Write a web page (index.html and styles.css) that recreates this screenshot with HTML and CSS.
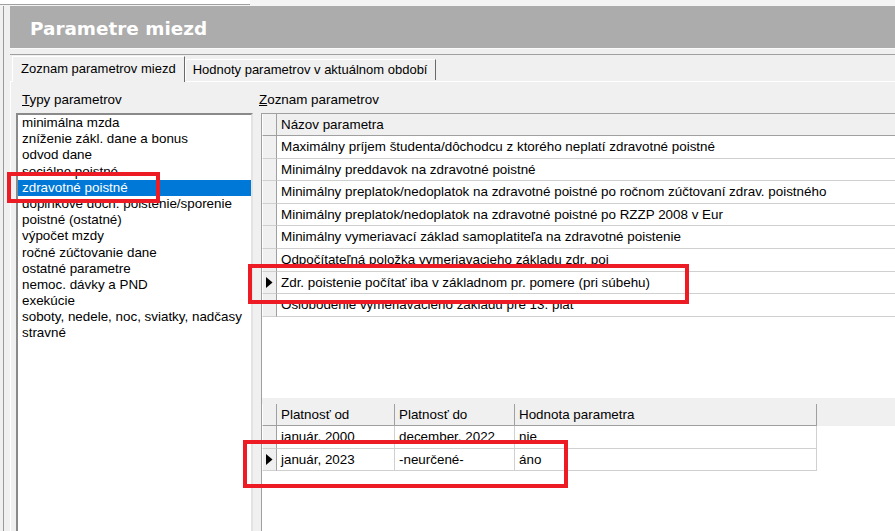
FILE: index.html
```html
<!DOCTYPE html>
<html lang="sk">
<head>
  <meta charset="UTF-8" />
  <title>Parametre miezd</title>
  <link rel="stylesheet" href="styles.css">
</head>
<body>
  <div class="topbar"><div class="topbar-left"></div></div>
  <div class="window">
    <div class="gutter"></div>
    <div class="main">
      <div class="title">Parametre miezd</div>
      <div class="tabstrip">
        <div class="tab active">Zoznam parametrov miezd</div>
        <div class="tab">Hodnoty parametrov v aktuálnom období</div>
      </div>
      <div class="page">
        <div class="types">
          <div class="caption"><u>T</u>ypy parametrov</div>
          <ul class="listbox">
            <li>minimálna mzda</li>
            <li>zníženie zákl. dane a bonus</li>
            <li>odvod dane</li>
            <li>sociálne poistné</li>
            <li class="selected">zdravotné poistné</li>
            <li>doplnkové dôch. poistenie/sporenie</li>
            <li>poistné (ostatné)</li>
            <li>výpočet mzdy</li>
            <li>ročné zúčtovanie dane</li>
            <li>ostatné parametre</li>
            <li>nemoc. dávky a PND</li>
            <li>exekúcie</li>
            <li>soboty, nedele, noc, sviatky, nadčasy</li>
            <li>stravné</li>
          </ul>
        </div>
        <div class="params">
          <div class="caption caption-params"><u>Z</u>oznam parametrov</div>
          <div class="grid grid-top">
            <div class="row head"><div class="ind"></div><div class="cell">Názov parametra</div></div>
            <div class="row"><div class="ind"></div><div class="cell">Maximálny príjem študenta/dôchodcu z ktorého neplatí zdravotné poistné</div></div>
            <div class="row"><div class="ind"></div><div class="cell">Minimálny preddavok na zdravotné poistné</div></div>
            <div class="row"><div class="ind"></div><div class="cell">Minimálny preplatok/nedoplatok na zdravotné poistné po ročnom zúčtovaní zdrav. poistného</div></div>
            <div class="row"><div class="ind"></div><div class="cell">Minimálny preplatok/nedoplatok na zdravotné poistné po RZZP 2008 v Eur</div></div>
            <div class="row"><div class="ind"></div><div class="cell">Minimálny vymeriavací základ samoplatiteľa na zdravotné poistenie</div></div>
            <div class="row"><div class="ind"></div><div class="cell">Odpočítateľná položka vymeriavacieho základu zdr. poi</div></div>
            <div class="row"><div class="ind"><svg width="7" height="11" viewBox="0 0 7 11"><polygon points="0,0 6.5,5.5 0,11" fill="#000"/></svg></div><div class="cell">Zdr. poistenie počítať iba v základnom pr. pomere (pri súbehu)</div></div>
            <div class="row"><div class="ind"></div><div class="cell">Oslobodenie vymeriavacieho základu pre 13. plat</div></div>
          </div>
          <div class="splitter"></div>
          <div class="grid grid-bottom">
            <div class="row head"><div class="ind"></div><div class="cell c1">Platnosť od</div><div class="cell c2">Platnosť do</div><div class="cell c3">Hodnota parametra</div></div>
            <div class="row"><div class="ind"></div><div class="cell c1">január, 2000</div><div class="cell c2">december, 2022</div><div class="cell c3">nie</div></div>
            <div class="row"><div class="ind"><svg width="7" height="11" viewBox="0 0 7 11"><polygon points="0,0 6.5,5.5 0,11" fill="#000"/></svg></div><div class="cell c1">január, 2023</div><div class="cell c2">-neurčené-</div><div class="cell c3">áno</div></div>
          </div>
        </div>
      </div>
    </div>
  </div>
  <div class="mark mark-type"></div>
  <div class="mark mark-param"></div>
  <div class="mark mark-value"></div>
</body>
</html>
```

FILE: styles.css
```css
html, body {
  margin: 0;
  padding: 0;
  height: 531px;
  overflow: hidden;
}
body {
  font-family: "Liberation Sans", Arial, sans-serif;
  font-size: 13.4px;
  color: #000;
  background: #f0f0f0;
  position: relative;
}
.topbar {
  height: 6px;
  background: #f4f4f4;
}
.topbar-left {
  width: 250px;
  height: 4px;
  background: #fff;
  border-bottom: 1px solid #a0a0a0;
}
.window {
  display: flex;
  height: 525px;
}
.gutter {
  width: 10px;
  flex: none;
  box-sizing: border-box;
  border-left: 3px solid #f0f0f0;
}
.gutter::before {
  content: "";
  display: block;
  width: 1px;
  height: 100%;
  background: #9a9a9a;
}
.main {
  flex: 1;
  display: flex;
  flex-direction: column;
  min-width: 0;
}
.title {
  height: 39px;
  padding-top: 3px;
  background: #acacac;
  color: #fff;
  font-family: "DejaVu Sans", Verdana, sans-serif;
  font-weight: bold;
  font-size: 18.4px;
  line-height: 39px;
  padding-left: 20px;
  border-bottom: 1px solid #fafafa;
}
.tabstrip {
  margin-top: 5px;
  border-top: 1px solid #a0a0a0;
  height: 26px;
  display: flex;
  align-items: flex-end;
  padding-left: 2px;
  font-size: 13px;
}
.tab {
  height: 20px;
  line-height: 20px;
  padding: 0 8px 0 7px;
  border-top: 1px solid #fff;
  border-left: 1px solid #fff;
  border-right: 1px solid #696969;
  margin-bottom: 1px;
}
.tab.active {
  height: 25px;
  line-height: 23px;
  padding: 0 8px;
  margin-bottom: -1px;
  background: #f0f0f0;
  position: relative;
  z-index: 1;
}
.page {
  flex: 1;
  display: flex;
  border-top: 1px solid #fff;
  border-left: 1px solid #fff;
  min-height: 0;
}
.types {
  width: 237px;
  flex: none;
  padding-left: 5px;
  display: flex;
  flex-direction: column;
}
.caption {
  height: 16px;
  line-height: 16px;
  margin: 10px 0 5px 6px;
}
.caption-params {
  margin-left: -2px;
}
.listbox {
  list-style: none;
  margin: 0;
  padding: 0;
  flex: 1;
  background: #fff;
  border-top: 2px solid #8a8a8a;
  border-left: 2px solid #8a8a8a;
  border-right: 2px solid #e3e3e3;
}
.listbox li {
  height: 16.2px;
  line-height: 16.2px;
  padding-left: 4px;
  white-space: nowrap;
}
.listbox li.selected {
  background: #0078d7;
  color: #fff;
}
.params {
  flex: 1;
  margin-left: 8px;
  display: flex;
  flex-direction: column;
  min-width: 0;
}
.grid {
  background: #fff;
  border-left: 1px solid #a0a0a0;
}
.grid-top {
  height: 284px;
  border-top: 1px solid #a0a0a0;
  flex: none;
}
.splitter {
  height: 6px;
  flex: none;
  background: #f0f0f0;
  border-left: 1px solid #a0a0a0;
}
.grid-bottom {
  flex: 1;
}
.row {
  display: flex;
  height: 22.6px;
  box-sizing: border-box;
  white-space: nowrap;
}
.row.head {
  height: 22px;
  background: #f0f0f0;
}
.ind {
  width: 13px;
  flex: none;
  background: #f0f0f0;
  border-left: 1px solid #fff;
  border-right: 1px solid #a0a0a0;
  border-bottom: 1px solid #d0d0d0;
  display: flex;
  align-items: center;
  justify-content: center;
}
.cell {
  flex: 1;
  padding-left: 4px;
  line-height: 21px;
  border-bottom: 1px solid #d0d0d0;
  overflow: hidden;
}
.head .ind,
.head .cell {
  border-bottom-color: #a0a0a0;
}
.grid-bottom .cell {
  flex: none;
  box-sizing: border-box;
  border-right: 1px solid #d0d0d0;
}
.grid-bottom .head .cell {
  border-right-color: #a0a0a0;
}
.c1 { width: 118px; }
.c2 { width: 120px; }
.c3 { width: 302px; }
.mark {
  position: absolute;
  border: 4px solid #ed1c24;
  box-sizing: border-box;
}
.mark-type {
  left: 7px;
  top: 172px;
  width: 153px;
  height: 31px;
}
.mark-param {
  left: 248px;
  top: 264px;
  width: 441px;
  height: 40px;
}
.mark-value {
  left: 243px;
  top: 440px;
  width: 325px;
  height: 48px;
}
```
